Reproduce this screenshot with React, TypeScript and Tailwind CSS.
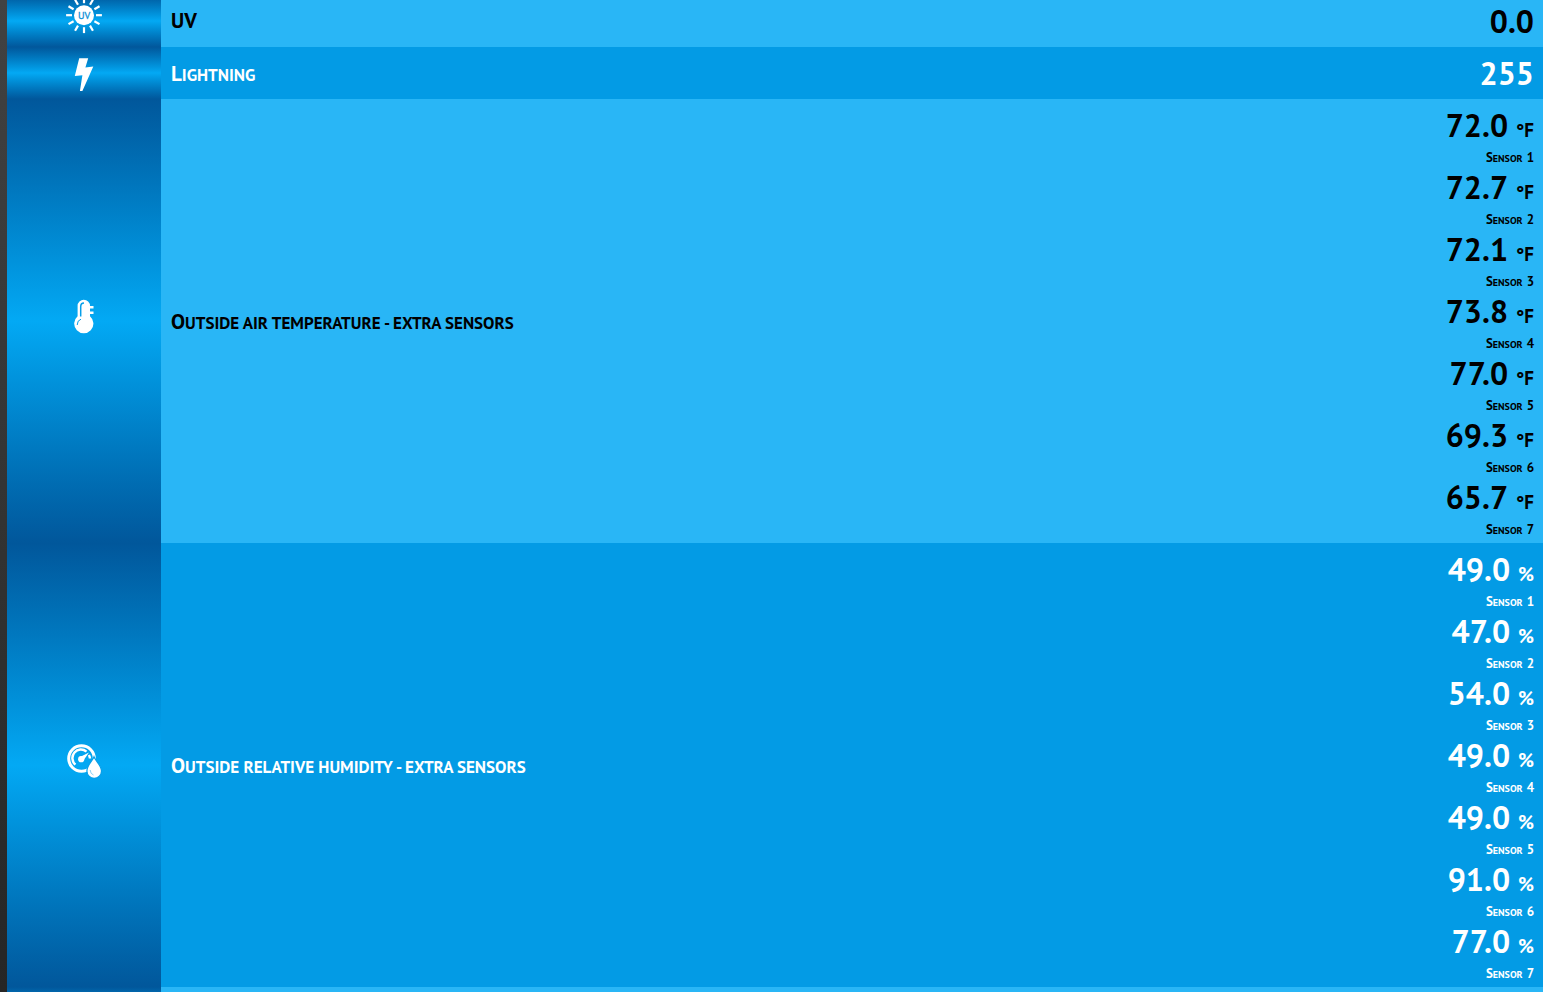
import type { ReactNode } from "react";

type Reading = { value: string; unit?: string; sensor?: number };
type Row = { title: string; icon: ReactNode; readings: Reading[]; iconShift?: boolean };

const spokes = [0, 30, 60, 90, 120, 150, 180, 210, 240, 270, 300, 330];

const UvIcon = () => (
  <svg viewBox="0 1.8 36 36" className="size-9" aria-hidden="true">
    <circle cx="18" cy="18" r="10" fill="#fff" />
    {spokes.map((a) => (
      <path key={a} d="M18 0.1V6" stroke="#fff" strokeWidth="2.2" transform={`rotate(${a} 18 18)`} />
    ))}
    <text x="18" y="21.8" textAnchor="middle" fontSize="10" fontWeight="400" fill="#0a8fd6" stroke="#0a8fd6" strokeWidth="0.3">UV</text>
  </svg>
);

const BoltIcon = () => (
  <svg viewBox="0 -1 36 36" className="size-9" aria-hidden="true">
    <path d="M13.2 2.2H22.2L19.4 11.6L27.3 10.6L16.4 34.9H13.9L16.4 19.2L8.8 20Z" fill="#fff" />
  </svg>
);

const ThermometerIcon = () => (
  <svg viewBox="0 0 36 36" className="size-9" aria-hidden="true">
    <path
      d="M11.6 7a6.2 6.2 0 0 1 12.4 0H27.5v2.6H24v2.8h3.5v2.6H24v2.3a9.6 9.6 0 1 1-12.4 0Z"
      fill="#fff"
    />
    <path d="M14.7 17.5V7.7Q14.7 4 18 4" fill="none" stroke="#079fe9" strokeWidth="1.5" />
    <path d="M11.2 26Q11.3 21.2 15 20.2" fill="none" stroke="#079fe9" strokeWidth="1" />
  </svg>
);

const HumidityIcon = () => (
  <svg viewBox="0 0 36 36" className="size-9" aria-hidden="true">
    <circle cx="15.5" cy="15.5" r="12.8" fill="none" stroke="#fff" strokeWidth="3" />
    <path d="M9.4 21.6A8.5 8.5 0 1 1 20.5 8.6" fill="none" stroke="#fff" strokeWidth="2.5" />
    <path d="M22.9 12A8.5 8.5 0 0 1 24 15.5" fill="none" stroke="#fff" strokeWidth="2.5" />
    <circle cx="15.2" cy="16.2" r="3.1" fill="#fff" />
    <path d="M14 14L23 9.4L17.4 17.6Z" fill="#fff" />
    <path
      d="M28 13.8C29.5 18 35.5 22.3 35.5 28A7.2 7.2 0 0 1 20.9 28C20.9 22.3 26.5 18 28 13.8Z"
      fill="#fff"
      stroke="#079fe9"
      strokeWidth="1.2"
    />
    <path d="M24.2 27Q24.4 31 27.5 32" fill="none" stroke="#8bd1f6" strokeWidth="1" />
  </svg>
);

const sensors = (values: string[], unit: string): Reading[] =>
  values.map((value, i) => ({ value, unit, sensor: i + 1 }));

const rows: Row[] = [
  { title: "UV", icon: <UvIcon />, readings: [{ value: "0.0" }], iconShift: true },
  { title: "Lightning", icon: <BoltIcon />, readings: [{ value: "255" }] },
  {
    title: "Outside air temperature - extra sensors",
    icon: <ThermometerIcon />,
    readings: sensors(["72.0", "72.7", "72.1", "73.8", "77.0", "69.3", "65.7"], "°F"),
    iconShift: true,
  },
  {
    title: "Outside relative humidity - extra sensors",
    icon: <HumidityIcon />,
    readings: sensors(["49.0", "47.0", "54.0", "49.0", "49.0", "91.0", "77.0"], "%"),
    iconShift: true,
  },
];

export default function App() {
  return (
    <div className="h-screen overflow-hidden bg-linear-to-b from-[#424242] to-[#262626] pl-[7px] font-['PT_Sans','Noto_Sans',sans-serif] font-bold">
      <table className="-mt-[5px] w-full border-collapse">
        <tbody>
          {rows.map((row) => (
            <tr
              key={row.title}
              className="text-black odd:bg-[#29b6f6] even:bg-[#039be5] even:text-white"
            >
              <td className="w-[154px] bg-linear-to-b from-[#01579b] via-[#03a9f4] to-[#01579b] p-0">
                <div className={row.iconShift ? "flex justify-center pb-2" : "flex justify-center"}>
                  {row.icon}
                </div>
              </td>
              <th scope="row" className="px-2.5 py-0 text-left font-bold">
                <div
                  className={
                    row.title === "UV"
                      ? "text-[21px] leading-6"
                      : "pt-0.5 text-[17px] leading-6 uppercase first-letter:text-[21px]"
                  }
                >
                  {row.title}
                </div>
              </th>
              <td className="py-[5px] pr-[9px] pl-2.5 text-right">
                {row.readings.map((r, i) => (
                  <div key={i}>
                    <div className="flex h-[42px] items-baseline justify-end gap-2 leading-[42px]">
                      <span className="text-[32px]">{r.value}</span>
                      {r.unit && <span className="text-[19px]">{r.unit}</span>}
                    </div>
                    {r.sensor && (
                      <div className="flex h-5 items-baseline justify-end gap-1 text-[13px] leading-6">
                        <span className="block text-[10px] uppercase first-letter:text-[13px]">
                          Sensor
                        </span>
                        <span>{r.sensor}</span>
                      </div>
                    )}
                  </div>
                ))}
              </td>
            </tr>
          ))}
          <tr className="h-[52px] bg-[#29b6f6]">
            <td className="bg-linear-to-b from-[#01579b] via-[#03a9f4] to-[#01579b]" />
            <td colSpan={2} />
          </tr>
        </tbody>
      </table>
    </div>
  );
}
